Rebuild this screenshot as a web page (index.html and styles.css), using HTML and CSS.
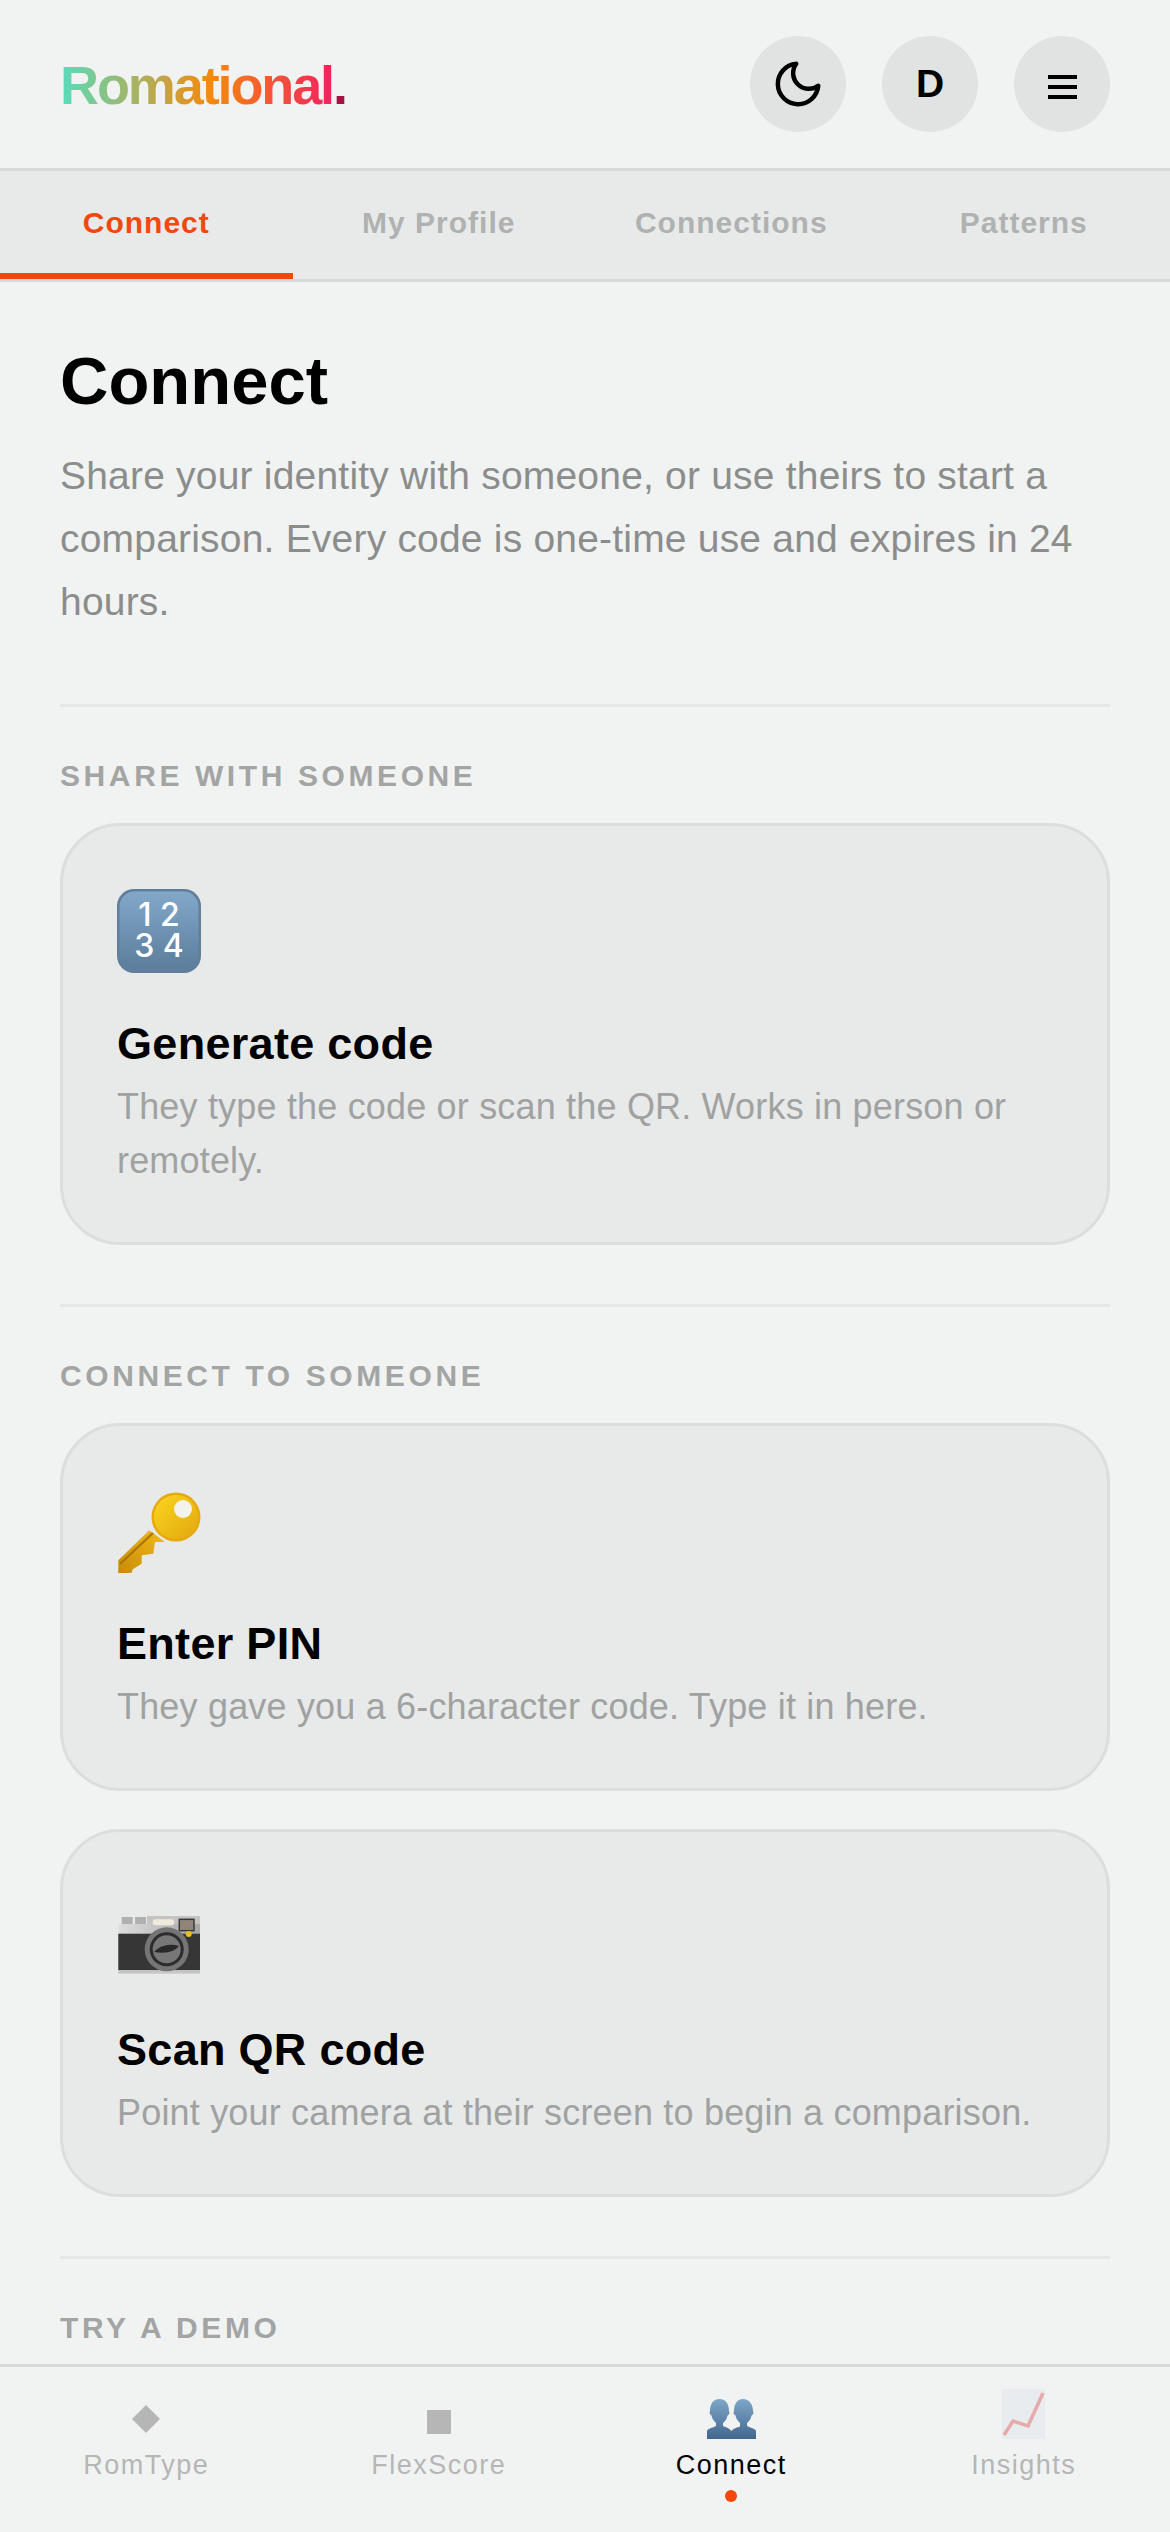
FILE: index.html
```html
<!DOCTYPE html>
<html lang="en">

<head>
    <meta charset="UTF-8">
    <meta name="viewport" content="width=device-width, initial-scale=1.0">
    <title>Romational</title>
    <link rel="stylesheet" href="styles.css">
</head>

<body>
    <!-- top bar -->
    <header class="topbar">
        <div class="logo"><span class="logo-word">Romational</span><span class="logo-dot">.</span></div>
        <div class="top-actions">
            <div class="round-btn">
                <svg class="moon" viewBox="0 0 24 24"><path d="M21 12.79A9 9 0 1 1 11.21 3 7 7 0 0 0 21 12.79z" fill="none" stroke="#000" stroke-width="2" stroke-linecap="round" stroke-linejoin="round"/></svg>
            </div>
            <div class="round-btn avatar">D</div>
            <div class="round-btn">
                <div class="burger"><i></i><i></i><i></i></div>
            </div>
        </div>
    </header>

    <!-- tabs -->
    <nav class="tabs">
        <div class="tab active">Connect</div>
        <div class="tab">My Profile</div>
        <div class="tab">Connections</div>
        <div class="tab">Patterns</div>
    </nav>

    <main class="content">
        <h1 class="title">Connect</h1>
        <p class="intro">Share your identity with someone, or use theirs to start a comparison. Every code is one-time use and expires in 24 hours.</p>

        <section class="section">
            <h2 class="label">SHARE WITH SOMEONE</h2>
            <div class="card">
                <div class="card-icon">
                    <svg width="84" height="84" viewBox="0 0 84 84">
                        <defs>
                            <linearGradient id="keycap" x1="0" y1="0" x2="0" y2="1">
                                <stop offset="0" stop-color="#82a8c9"/>
                                <stop offset="1" stop-color="#5c7d9c"/>
                            </linearGradient>
                        </defs>
                        <rect width="84" height="84" rx="17" fill="#617f9b"/>
                        <rect x="2.500" y="2.500" width="79" height="78" rx="15" fill="url(#keycap)"/>
                        <text class="keycap-text" x="42" y="37">1 2</text>
                        <text class="keycap-text" x="42" y="68">3 4</text>
                    </svg>
                </div>
                <h3 class="card-title">Generate code</h3>
                <p class="card-text">They type the code or scan the QR. Works in person or remotely.</p>
            </div>
        </section>

        <section class="section">
            <h2 class="label">CONNECT TO SOMEONE</h2>
            <div class="card">
                <div class="card-icon">
                    <svg width="84" height="84" viewBox="0 0 84 84">
                        <defs>
                            <linearGradient id="gold" x1="0" y1="0" x2="1" y2="1">
                                <stop offset="0" stop-color="#fbd61e"/>
                                <stop offset="1" stop-color="#e2a70f"/>
                            </linearGradient>
                            <linearGradient id="blade" x1="0" y1="1" x2="1" y2="0">
                                <stop offset="0" stop-color="#c98a08"/>
                                <stop offset="1" stop-color="#f0bc16"/>
                            </linearGradient>
                        </defs>
                        <g transform="translate(0 3)">
                            <path d="M32.300 38.300 L1.300 68.300 L1.300 81.700 L14.700 80.700 L15.700 77.300 L24.700 71.700 L24.700 63.300 L36.300 61.700 L38 50 L48 50Z" fill="url(#blade)"/>
                            <path d="M3 72 L36 41" stroke="#a87206" stroke-width="2" fill="none"/>
                            <circle cx="59" cy="25" r="24.500" fill="#e6aa10"/>
                            <circle cx="59" cy="25" r="22" fill="url(#gold)"/>
                            <circle cx="66" cy="17" r="9" fill="#f3f3ee"/>
                        </g>
                    </svg>
                </div>
                <h3 class="card-title">Enter PIN</h3>
                <p class="card-text">They gave you a 6-character code. Type it in here.</p>
            </div>
            <div class="card">
                <div class="card-icon">
                    <svg width="84" height="84" viewBox="0 0 84 84">
                        <defs>
                            <linearGradient id="camtop" x1="0" y1="0" x2="1" y2="0">
                                <stop offset="0" stop-color="#dedede"/>
                                <stop offset="1" stop-color="#a6a6a6"/>
                            </linearGradient>
                        </defs>
                        <rect x="4.700" y="22" width="11" height="8" fill="#b0b0b0"/>
                        <rect x="18" y="22" width="11" height="8" fill="#b0b0b0"/>
                        <rect x="30" y="21" width="53" height="9" fill="#c4c4c4"/>
                        <rect x="1.300" y="29" width="81.700" height="10" fill="url(#camtop)"/>
                        <rect x="1.300" y="38.700" width="81.700" height="36.600" fill="#363636"/>
                        <rect x="1.300" y="75.300" width="81.700" height="3.400" fill="#c6c6c6"/>
                        <rect x="35.700" y="24.300" width="21.300" height="6" rx="2.500" fill="#efeadc"/>
                        <rect x="62.300" y="24.300" width="14.700" height="11.400" fill="#8f857b" stroke="#3a3a3a" stroke-width="1.500"/>
                        <circle cx="49.700" cy="54.300" r="22" fill="#757575"/>
                        <circle cx="49.700" cy="54.300" r="17" fill="#2c2c2c"/>
                        <circle cx="49.700" cy="54.300" r="14" fill="#777"/>
                        <path d="M37 57 Q47 47 62 51 Q55 60 37 57Z" fill="#292929"/>
                        <circle cx="71.700" cy="39" r="3" fill="#f0bc1a"/>
                    </svg>
                </div>
                <h3 class="card-title">Scan QR code</h3>
                <p class="card-text">Point your camera at their screen to begin a comparison.</p>
            </div>
        </section>

        <section class="section">
            <h2 class="label">TRY A DEMO</h2>
        </section>
    </main>

    <!-- bottom nav -->
    <footer class="bottom-nav">
        <div class="nav-item">
            <div class="nav-icon">
                <svg class="diamond" width="28" height="28" viewBox="0 0 28 28"><path d="M14 0 28 14 14 28 0 14Z" fill="#b5b6b5"/></svg>
            </div>
            <div class="nav-label">RomType</div>
        </div>
        <div class="nav-item">
            <div class="nav-icon">
                <svg class="square" width="24" height="24" viewBox="0 0 24 24"><rect width="24" height="24" fill="#b5b6b5"/></svg>
            </div>
            <div class="nav-label">FlexScore</div>
        </div>
        <div class="nav-item current">
            <div class="nav-icon">
                <svg width="49" height="40" viewBox="0 0 49 40">
                    <defs>
                        <linearGradient id="bust" x1="0" y1="0" x2="0" y2="40" gradientUnits="userSpaceOnUse">
                            <stop offset="0" stop-color="#7fa7c8"/>
                            <stop offset="1" stop-color="#41678f"/>
                        </linearGradient>
                    </defs>
                    <path d="M25 40V32C25 30 30 28.500 33 27.500V24C30.500 22 29 19 28.500 16.500 26.500 15.500 26 13.500 27 12 27 5 30 0 36 0 42 0 46 5 46 12 47 13.500 46.500 15.500 44.500 16.500 44 19 43 22 40 24V27C43 28.500 49 30 49 32V40Z" fill="url(#bust)"/>
                    <path d="M0 40V32C0 30 6 28.500 9 27V24C6.500 22 5 19 4.500 16.500 2.500 15.500 2 13.500 3 12 3 5 6 0 12.500 0 19 0 22 5 22 12 23 13.500 22.500 15.500 20.500 16.500 20 19 19 22 16 24V27C21 29 26 31 31 40Z" fill="url(#bust)"/>
                </svg>
            </div>
            <div class="nav-label">Connect</div>
            <span class="nav-dot"></span>
        </div>
        <div class="nav-item">
            <div class="nav-icon">
                <svg class="chart" width="43" height="50" viewBox="0 0 43 50">
                    <rect width="43" height="50" fill="#dfe5ea"/>
                    <path d="M2 46 L11 32 L26 37 L41 4" fill="none" stroke="#d95454" stroke-width="3.500"/>
                </svg>
            </div>
            <div class="nav-label">Insights</div>
        </div>
    </footer>
</body>

</html>
```
FILE: styles.css
```css
* {
    margin: 0;
    padding: 0;
    box-sizing: border-box;
}

body {
    height: 2532px;
    display: flex;
    flex-direction: column;
    overflow: hidden;
    background-color: #f1f3f2;
    color: #000;
    font-family: "Liberation Sans", sans-serif;
}

/* top bar */
.topbar {
    flex: none;
    height: 171px;
    padding: 36px 60px 0 60px;
    display: flex;
    justify-content: space-between;
    align-items: flex-start;
    border-bottom: 3px solid #d8d9d9;
}

.logo {
    font-size: 54px;
    font-weight: 700;
    letter-spacing: -2.100px;
    line-height: 98px;
}

.logo-word {
    background: linear-gradient(90deg, #58dcbc 0%, #f58a0c 55%, #f2225f 100%);
    -webkit-background-clip: text;
    background-clip: text;
    color: transparent;
}

.logo-dot {
    color: #a11345;
}

.top-actions {
    display: flex;
    gap: 36px;
}

.round-btn {
    width: 96px;
    height: 96px;
    border-radius: 50%;
    background-color: #e1e3e2;
    display: flex;
    align-items: center;
    justify-content: center;
}

.moon {
    width: 54px;
    height: 54px;
}

.avatar {
    font-size: 39px;
    font-weight: 700;
}

.burger {
    width: 29px;
    margin-top: 6px;
    display: flex;
    flex-direction: column;
    gap: 6px;
}

.burger i {
    display: block;
    height: 4px;
    background-color: #000;
}

/* tabs */
.tabs {
    flex: none;
    height: 111px;
    display: flex;
    background-color: #e8eaea;
    border-bottom: 3px solid #d8d9d9;
}

.tab {
    flex: 1;
    display: flex;
    align-items: center;
    justify-content: center;
    padding-top: 2px;
    font-size: 30px;
    font-weight: 700;
    letter-spacing: 1px;
    color: #b0b2b1;
    border-bottom: 6px solid transparent;
}

.tab.active {
    color: #f4470b;
    border-bottom-color: #f4470b;
}

/* content */
.content {
    flex: 1;
    min-height: 0;
    overflow: hidden;
    padding: 54px 60px 0 60px;
}

.title {
    font-size: 67px;
    font-weight: 700;
    line-height: 90px;
}

.intro {
    margin-top: 18px;
    margin-bottom: 71px;
    font-size: 39px;
    line-height: 63px;
    letter-spacing: .2px;
    color: #8b8d8c;
}

.section {
    margin-top: 59px;
    padding-top: 51px;
    border-top: 3px solid #e5e7e6;
}

.label {
    font-size: 30px;
    font-weight: 700;
    letter-spacing: 3.600px;
    line-height: 36px;
    color: #a3a5a4;
    margin-bottom: 29px;
}

.card {
    padding: 54px;
    border: 3px solid #dcdede;
    border-radius: 60px;
    background-color: #e8eaea;
}

.card + .card {
    margin-top: 38px;
}

.card-icon {
    height: 102px;
    display: flex;
    align-items: center;
}

.keycap-text {
    font-family: Inter, sans-serif;
    font-size: 32px;
    font-weight: 500;
    fill: #fff;
    text-anchor: middle;
}

.card-title {
    margin-top: 34px;
    font-size: 45px;
    font-weight: 700;
    letter-spacing: .3px;
    line-height: 56px;
}

.card-text {
    margin-top: 8px;
    font-size: 36px;
    line-height: 54px;
    letter-spacing: .18px;
    color: #a0a2a1;
}

/* bottom nav */
.bottom-nav {
    flex: none;
    height: 168px;
    display: flex;
    border-top: 3px solid #d8d9d9;
    background-color: #f1f3f2;
}

.nav-item {
    flex: 1;
    display: flex;
    flex-direction: column;
    align-items: center;
    color: #b5b6b5;
}

.nav-icon {
    height: 72px;
    display: flex;
    align-items: flex-end;
    justify-content: center;
}

.diamond {
    margin-bottom: 6px;
}

.square {
    margin-bottom: 5px;
}

.chart {
    opacity: .45;
}

.nav-label {
    margin-top: 8px;
    font-size: 27px;
    line-height: 36px;
    letter-spacing: 1.500px;
}

.nav-item.current {
    color: #000;
}

.nav-dot {
    width: 12px;
    height: 12px;
    margin-top: 7px;
    border-radius: 50%;
    background-color: #f4470b;
}
```
